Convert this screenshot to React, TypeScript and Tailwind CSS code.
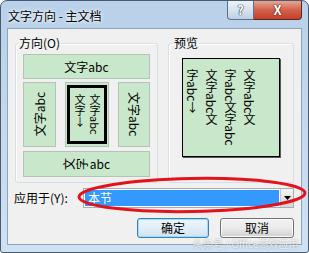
const vr = "[writing-mode:vertical-rl]";

function Strip({ children, className = "" }: { children: React.ReactNode; className?: string }) {
  return (
    <div className={`flex items-center justify-center border border-[#b3c3b4] bg-[#c9e7ca] ${className}`}>
      {children}
    </div>
  );
}

export default function App() {
  return (
    <div className="relative h-[253px] w-[309px] overflow-hidden bg-white font-['Noto_Sans_CJK_SC',sans-serif] text-[12px] leading-[14px] text-black">
      <div className="flex h-full flex-col rounded-t-[7px] rounded-b-[3px] border border-[#4a5b70] bg-gradient-to-b from-[#b8d0e9] via-[#c5d9ed] to-[#cfe1f3]">
        {/* caption bar */}
        <div className="flex h-[27px] shrink-0 items-start">
          <span className="ml-[7px] mt-[8px] [text-shadow:0_0_5px_#fff,0_0_3px_#fff]">文字方向 - 主文档</span>
          <div className="ml-auto mr-[6px] flex">
            <div className="flex h-[19px] w-[27px] items-center justify-center rounded-bl-[4px] border border-t-0 border-[#5e7188] bg-gradient-to-b from-[#edf2f8] via-[#d7e3ef] to-[#bcd0e4] text-[13px] font-bold text-white [text-shadow:0_0_1px_#2b3b4e,0_0_1px_#2b3b4e,0_0_1px_#2b3b4e]">
              ?
            </div>
            <div className="flex h-[19px] w-[48px] items-center justify-center rounded-br-[4px] border border-l-0 border-t-0 border-[#5a261f] bg-gradient-to-b from-[#e6a594] via-[#d1614b] to-[#c53f27] text-[13px] font-bold text-white [text-shadow:0_0_1px_#4a1a12,0_0_1px_#4a1a12,0_0_1px_#4a1a12]">
              X
            </div>
          </div>
        </div>

        {/* client area */}
        <div className="mx-[6px] mb-[7px] flex flex-1 flex-col border border-[#8ea4ba] bg-[#f0f0f0] px-[7px] pt-[7px]">
          <div className="flex gap-[10px]">
            {/* direction group */}
            <fieldset className="h-[147px] w-[143px] rounded-[3px] border border-[#d5dfe5] shadow-[inset_1px_1px_0_#fff]">
              <legend className="ml-[2px] px-[1px]">方向(O)</legend>
              <div className="flex flex-col gap-[3px] pl-[7px] pt-[4px]">
                <Strip className="h-[25px] w-[127px]">文字abc</Strip>
                <div className="flex h-[65px] gap-[9px]">
                  <Strip className="w-[33px]">
                    <span className={`${vr} rotate-180 [text-orientation:sideways] leading-[12px]`}>文字abc</span>
                  </Strip>
                  <div className="w-[44px] border border-[#b3c3b4] bg-[#c9e7ca] px-[1px] py-[2px]">
                    <div className="flex h-full items-center justify-center border-[3px] border-black">
                      <span className={`${vr} text-[11px] leading-[15px]`}>
                        文字abc
                        <br />
                        文字<span className="[text-orientation:upright]">↓</span>
                      </span>
                    </div>
                  </div>
                  <Strip className="w-[32px]">
                    <span className={`${vr} [text-orientation:sideways] leading-[12px]`}>文字abc</span>
                  </Strip>
                </div>
                <Strip className="mt-[1px] h-[26px] w-[127px] gap-[1px]">
                  <span className={`${vr} rotate-180 [text-orientation:sideways] leading-[12px]`}>文</span>
                  <span className={`${vr} rotate-180 [text-orientation:sideways] leading-[12px]`}>字</span>
                  <span className="ml-[1px]">abc</span>
                </Strip>
              </div>
            </fieldset>

            {/* preview group */}
            <fieldset className="h-[147px] w-[126px] rounded-[3px] border border-[#d5dfe5] shadow-[inset_1px_1px_0_#fff]">
              <legend className="ml-[4px] px-[1px]">预览</legend>
              <div className="pl-[13px] pt-[8px]">
                <div className="h-[99px] w-[98px] border border-black bg-[#c9e7ca] shadow-[1px_1px_0_#5a5a5a]">
                  <div className={`${vr} h-full pr-[6px] pt-[10px] leading-[19px]`}>
                    文字abc文
                    <br />
                    字abc文字abc
                    <br />
                    文字abc文
                    <br />
                    字abc<span className="[text-orientation:upright]">↓</span>
                  </div>
                </div>
              </div>
            </fieldset>
          </div>

          {/* apply to */}
          <div className="mt-[5px] flex h-[20px] items-center">
            <span className="-ml-[1px]">应用于(Y):</span>
            <div className="ml-auto flex h-full w-[211px] border border-[#a5acb5] bg-white">
              <div className="m-[1px] flex flex-1 items-center bg-[#3399ff] pl-[3px] text-white">本节</div>
              <div className="flex w-[13px] items-center justify-center border-l border-[#c5c5c5] bg-gradient-to-b from-[#f4f4f4] to-[#d6d6d6]">
                <svg width="7" height="4" viewBox="0 0 7 4">
                  <path d="M0 0h7L3.5 4z" fill="#000" />
                </svg>
              </div>
            </div>
          </div>

          {/* buttons */}
          <div className="mt-[10px] flex justify-end gap-[11px]">
            <div className="flex h-[20px] w-[72px] items-center justify-center rounded-[3px] border border-[#3c7fb1] bg-gradient-to-b from-[#eaf6fd] via-[#e3eef7] to-[#cde4f2] shadow-[inset_0_0_0_1px_#9fdcf6]">
              确定
            </div>
            <div className="flex h-[20px] w-[74px] items-center justify-center rounded-[3px] border border-[#707070] bg-gradient-to-b from-[#f2f2f2] via-[#ebebeb] to-[#d0d0d0] shadow-[inset_0_0_0_1px_#fbfbfb]">
              取消
            </div>
          </div>
        </div>
      </div>

      {/* red annotation ellipse */}
      <svg className="pointer-events-none absolute inset-0" width="309" height="253" viewBox="0 0 309 253">
        <ellipse cx="192" cy="195" rx="113" ry="16.5" fill="none" stroke="#e3131b" strokeWidth="3" transform="rotate(-1 192 195)" />
      </svg>

      {/* watermark */}
      <div className="pointer-events-none absolute left-[193px] top-[238px] text-[10px] leading-[12px] text-white/75 [text-shadow:0_0_2px_rgba(0,0,0,0.35)]">
        头条号 / Office高效应用
      </div>
    </div>
  );
}
